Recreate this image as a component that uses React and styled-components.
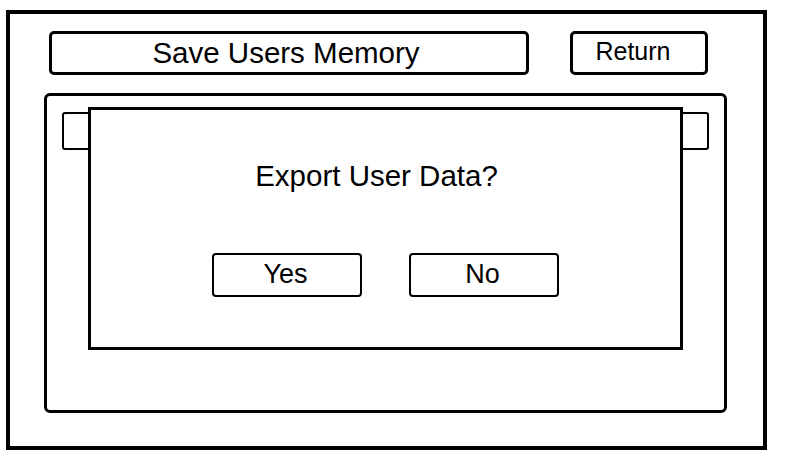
import React from 'react';
import styled, { createGlobalStyle } from 'styled-components';

const App = () => {
	return (
		<>
			<GlobalStyle />
			<Frame>
				<Header>
					<Title>Save Users Memory</Title>
					<HeaderButton>Return</HeaderButton>
				</Header>
				<Panel>
					<Row />
					<Dialog>
						<Question>Export User Data?</Question>
						<Actions>
							<DialogButton>Yes</DialogButton>
							<DialogButton>No</DialogButton>
						</Actions>
					</Dialog>
				</Panel>
			</Frame>
		</>
	)
}

const GlobalStyle = createGlobalStyle`
	html, body {
		margin: 0;
		background: #fff;
		font-family: "Liberation Sans", Arial, sans-serif;
		color: #000;
	}
	* {
		box-sizing: border-box;
	}
`;

const Frame = styled.div`
	margin: 10px 0 0 6px;
	width: 761px;
	height: 440px;
	border: 4px solid #000;
	padding: 17px 0 0 34px;
`;

const Header = styled.div`
	display: flex;
	gap: 41px;
	height: 44px;
	margin-left: 5px;
`;

const Title = styled.div`
	width: 480px;
	border: 3px solid #000;
	border-radius: 5px;
	display: flex;
	align-items: center;
	justify-content: center;
	font-size: 29.5px;
	padding: 0 6px 1px 0;
`;

const HeaderButton = styled.div`
	width: 138px;
	border: 3px solid #000;
	border-radius: 5px;
	display: flex;
	align-items: center;
	justify-content: center;
	font-size: 25px;
	padding: 0 12px 4px 0;
`;

const Panel = styled.div`
	position: relative;
	margin-top: 18px;
	width: 683px;
	height: 320px;
	border: 3px solid #000;
	border-radius: 6px;
	padding: 16px 15px 0 15px;
`;

const Row = styled.div`
	height: 38px;
	border: 2px solid #000;
	border-radius: 3px;
`;

const Dialog = styled.div`
	position: absolute;
	left: 41px;
	top: 11px;
	width: 595px;
	height: 243px;
	border: 3px solid #000;
	background: #fff;
	display: flex;
	flex-direction: column;
	align-items: center;
	padding-top: 51px;
`;

const Question = styled.div`
	font-size: 29.5px;
	line-height: 29px;
	margin-right: 18px;
`;

const Actions = styled.div`
	display: flex;
	gap: 47px;
	margin-top: 63px;
`;

const DialogButton = styled.div`
	width: 150px;
	height: 44px;
	border: 2px solid #000;
	border-radius: 4px;
	display: flex;
	align-items: center;
	justify-content: center;
	font-size: 27px;
	padding: 0 3px 2px 0;
`;

export default App;
